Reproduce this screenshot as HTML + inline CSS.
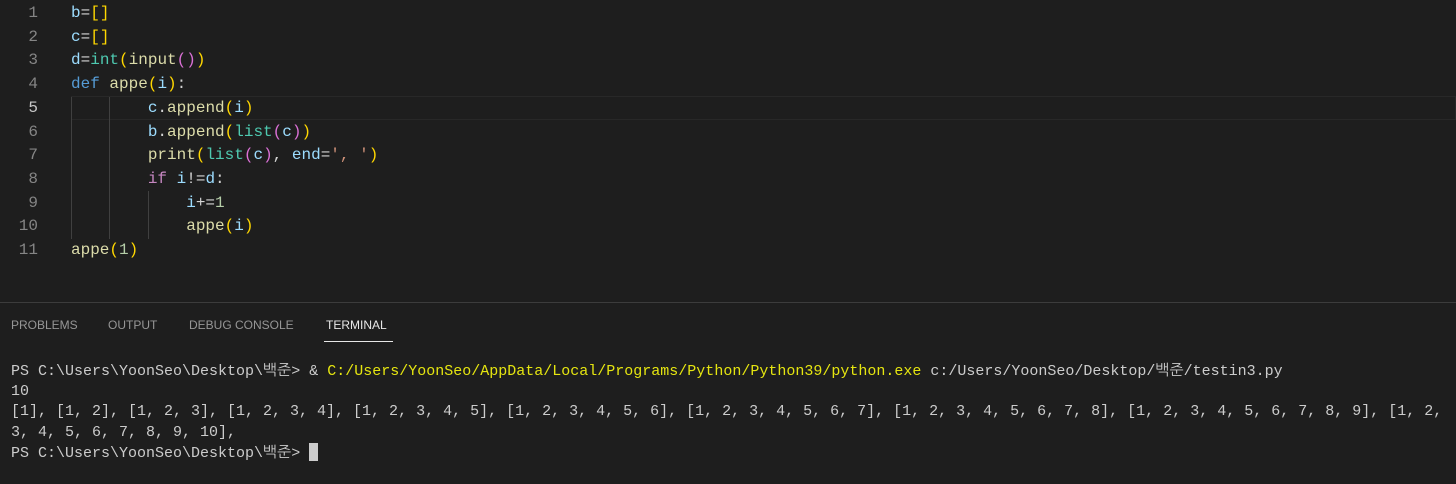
<!DOCTYPE html><html><head><style>
body{margin:0;width:1456px;height:484px;background:#1e1e1e;overflow:hidden;position:relative;font-family:"Liberation Mono","NanumGothic",monospace}
.ln{position:absolute;left:0;width:38px;text-align:right;color:#858585;font-size:16px}
.code{position:absolute;left:71px;font-size:16px;line-height:23.7px;white-space:pre;color:#d4d4d4;top:2px}
.v{color:#9cdcfe}.f{color:#dcdcaa}.t{color:#4ec9b0}.k{color:#569cd6}.c{color:#c586c0}.g{color:#ffd700}.p{color:#da70d6}.b{color:#179fff}.n{color:#b5cea8}.s{color:#ce9178}
.guide{position:absolute;width:1px;background:#404040}
.tabs{position:absolute;top:318px;font-family:"Liberation Sans",sans-serif;font-size:12px;color:#969696}
.term{position:absolute;left:11px;top:362px;font-size:15px;line-height:20.2px;color:#cccccc;white-space:pre;letter-spacing:0}
</style></head><body>
<div class="ln" style="top:2px;line-height:23.7px">1<br>2<br>3<br>4<br><span style="color:#c6c6c6">5</span><br>6<br>7<br>8<br>9<br>10<br>11</div>
<div style="position:absolute;left:71px;right:0;top:96px;height:22px;border:1px solid #282828"></div>
<div class="guide" style="left:71px;top:97px;height:142px"></div>
<div class="guide" style="left:109px;top:97px;height:142px"></div>
<div class="guide" style="left:148px;top:191px;height:48px"></div>
<div class="code"><span class="v">b</span>=<span class="g">[]</span>
<span class="v">c</span>=<span class="g">[]</span>
<span class="v">d</span>=<span class="t">int</span><span class="g">(</span><span class="f">input</span><span class="p">()</span><span class="g">)</span>
<span class="k">def</span> <span class="f">appe</span><span class="g">(</span><span class="v">i</span><span class="g">)</span>:
        <span class="v">c</span>.<span class="f">append</span><span class="g">(</span><span class="v">i</span><span class="g">)</span>
        <span class="v">b</span>.<span class="f">append</span><span class="g">(</span><span class="t">list</span><span class="p">(</span><span class="v">c</span><span class="p">)</span><span class="g">)</span>
        <span class="f">print</span><span class="g">(</span><span class="t">list</span><span class="p">(</span><span class="v">c</span><span class="p">)</span>, <span class="v">end</span>=<span class="s">', '</span><span class="g">)</span>
        <span class="c">if</span> <span class="v">i</span>!=<span class="v">d</span>:
            <span class="v">i</span>+=<span class="n">1</span>
            <span class="f">appe</span><span class="g">(</span><span class="v">i</span><span class="g">)</span>
<span class="f">appe</span><span class="g">(</span><span class="n">1</span><span class="g">)</span></div>
<div style="position:absolute;left:0;right:0;top:302px;height:1px;background:#3c3c3c"></div>
<div class="tabs" style="left:11px">PROBLEMS</div>
<div class="tabs" style="left:108px">OUTPUT</div>
<div class="tabs" style="left:189px">DEBUG CONSOLE</div>
<div class="tabs" style="left:326px;color:#e7e7e7">TERMINAL</div>
<div style="position:absolute;left:324px;top:341px;width:69px;height:1px;background:#e7e7e7"></div>
<div class="term">PS C:\Users\YoonSeo\Desktop\백준&gt; &amp; <span style="color:#e5e510">C:/Users/YoonSeo/AppData/Local/Programs/Python/Python39/python.exe</span> c:/Users/YoonSeo/Desktop/백준/testin3.py
10
[1], [1, 2], [1, 2, 3], [1, 2, 3, 4], [1, 2, 3, 4, 5], [1, 2, 3, 4, 5, 6], [1, 2, 3, 4, 5, 6, 7], [1, 2, 3, 4, 5, 6, 7, 8], [1, 2, 3, 4, 5, 6, 7, 8, 9], [1, 2,
3, 4, 5, 6, 7, 8, 9, 10],
PS C:\Users\YoonSeo\Desktop\백준&gt; <span style="display:inline-block;width:9px;height:18px;background:#cccccc;vertical-align:-4px"></span></div>
</body></html>
